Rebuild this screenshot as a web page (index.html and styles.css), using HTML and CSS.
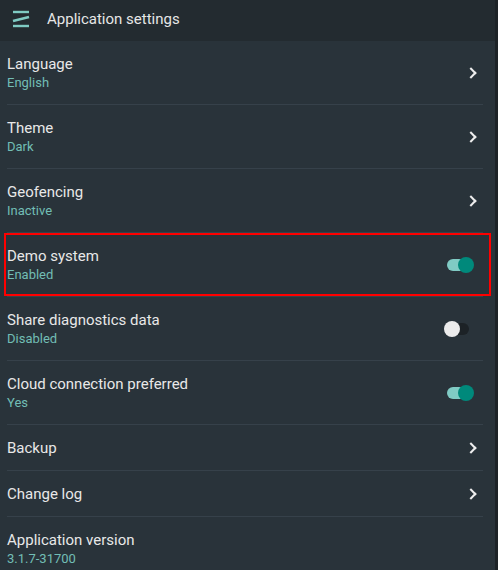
FILE: index.html
```html
<!DOCTYPE html>
<html lang="en">

<head>
  <meta charset="UTF-8" />
  <meta name="viewport" content="width=device-width, initial-scale=1.0" />
  <title>Application settings</title>
  <link rel="stylesheet" href="styles.css">
</head>

<body>
  <header class="topbar">
    <svg class="menu-icon" width="18" height="18" viewBox="0 0 18 18">
      <line x1="1" y1="2" x2="17" y2="2" />
      <line x1="1" y1="11" x2="17" y2="7" />
      <line x1="1" y1="16" x2="17" y2="16" />
    </svg>
    <span class="topbar-title">Application settings</span>
  </header>

  <div class="settings">
    <div class="row">
      <div class="text">
        <div class="title">Language</div>
        <div class="value">English</div>
      </div>
      <span class="chevron"></span>
    </div>
    <div class="row">
      <div class="text">
        <div class="title">Theme</div>
        <div class="value">Dark</div>
      </div>
      <span class="chevron"></span>
    </div>
    <div class="row">
      <div class="text">
        <div class="title">Geofencing</div>
        <div class="value">Inactive</div>
      </div>
      <span class="chevron"></span>
    </div>
    <div class="row highlighted">
      <div class="text">
        <div class="title">Demo system</div>
        <div class="value">Enabled</div>
      </div>
      <span class="switch on"></span>
    </div>
    <div class="row">
      <div class="text">
        <div class="title">Share diagnostics data</div>
        <div class="value">Disabled</div>
      </div>
      <span class="switch"></span>
    </div>
    <div class="row">
      <div class="text">
        <div class="title">Cloud connection preferred</div>
        <div class="value">Yes</div>
      </div>
      <span class="switch on"></span>
    </div>
    <div class="row short">
      <div class="text">
        <div class="title">Backup</div>
      </div>
      <span class="chevron"></span>
    </div>
    <div class="row short">
      <div class="text">
        <div class="title">Change log</div>
      </div>
      <span class="chevron"></span>
    </div>
    <div class="row last">
      <div class="text">
        <div class="title">Application version</div>
        <div class="value">3.1.7-31700</div>
      </div>
    </div>
  </div>
</body>

</html>
```

FILE: styles.css
```css
body {
  margin: 0;
  font-family: Roboto, 'Noto Sans', sans-serif;
  background-color: #29333a;
  border-right: 3px solid #1d2327;
  height: 570px;
  overflow: hidden;
}

.topbar {
  height: 41px;
  box-sizing: border-box;
  padding-bottom: 4px;
  background-color: #232b30;
  display: flex;
  align-items: center;
  padding-left: 12px;
}

.menu-icon {
  stroke: #7fcbc3;
  stroke-width: 2.4;
  margin-right: 17px;
}

.topbar-title {
  color: #e6e6e6;
  font-size: 15px;
}

.settings {
  padding: 0 12px 0 7px;
}

.row {
  height: 64px;
  display: flex;
  align-items: center;
  border-bottom: 1px solid #36414a;
  box-sizing: border-box;
  position: relative;
}

.row.short {
  height: 46px;
}

.row.last {
  border-bottom: none;
}

.row.highlighted::after {
  content: '';
  position: absolute;
  left: -3px;
  right: -8px;
  top: 0;
  bottom: 0;
  border: 2px solid #ff0000;
}

.text {
  flex: 1;
}

.title {
  color: #e8e8e8;
  font-size: 15px;
  line-height: 20px;
}

.value {
  color: #72beb5;
  font-size: 13px;
  line-height: 18px;
}

.chevron {
  width: 6px;
  height: 6px;
  border-top: 2px solid #eeeeee;
  border-right: 2px solid #eeeeee;
  transform: rotate(45deg);
  margin-right: 8px;
}

.switch {
  width: 22px;
  height: 12px;
  border-radius: 6px;
  background-color: #1c2226;
  position: relative;
  margin-right: 14px;
}

.switch::after {
  content: '';
  position: absolute;
  width: 16px;
  height: 16px;
  border-radius: 50%;
  top: -2px;
  left: -3px;
  background-color: #ececec;
}

.switch.on {
  background-color: #80cbc4;
}

.switch.on::after {
  left: 11px;
  background-color: #00897b;
}
```
